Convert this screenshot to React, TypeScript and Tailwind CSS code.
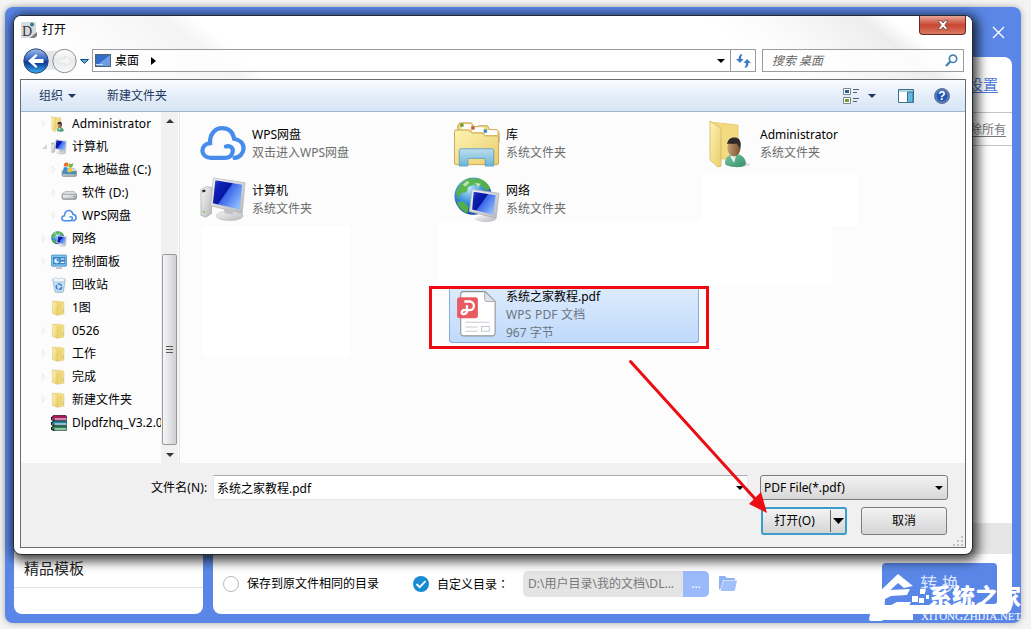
import { ReactNode } from "react";

type IconName =
  | "user"
  | "computer"
  | "diskC"
  | "diskD"
  | "cloud"
  | "network"
  | "control"
  | "recycle"
  | "folder"
  | "archive"
  | "library"
  | "pdf";

interface TreeItem {
  label: string;
  icon: IconName;
  indent?: boolean;
  arrow?: boolean;
  open?: boolean;
}

const treeItems: TreeItem[] = [
  { label: "Administrator", icon: "user", arrow: true },
  { label: "计算机", icon: "computer", arrow: true, open: true },
  { label: "本地磁盘 (C:)", icon: "diskC", indent: true, arrow: true },
  { label: "软件 (D:)", icon: "diskD", indent: true, arrow: true },
  { label: "WPS网盘", icon: "cloud", indent: true, arrow: true },
  { label: "网络", icon: "network", arrow: true },
  { label: "控制面板", icon: "control", arrow: true },
  { label: "回收站", icon: "recycle" },
  { label: "1图", icon: "folder" },
  { label: "0526", icon: "folder", arrow: true },
  { label: "工作", icon: "folder", arrow: true },
  { label: "完成", icon: "folder", arrow: true },
  { label: "新建文件夹", icon: "folder", arrow: true },
  { label: "Dlpdfzhq_V3.2.0", icon: "archive" },
];

const fileItems: { name: string; detail: string; icon: IconName }[] = [
  { name: "WPS网盘", detail: "双击进入WPS网盘", icon: "cloud" },
  { name: "库", detail: "系统文件夹", icon: "library" },
  { name: "Administrator", detail: "系统文件夹", icon: "user" },
  { name: "计算机", detail: "系统文件夹", icon: "computer" },
  { name: "网络", detail: "系统文件夹", icon: "network" },
];

function Gradients() {
  return (
    <svg width="0" height="0" className="absolute">
      <defs>
        <linearGradient id="screen" x1="0" y1="0" x2="1" y2=".7">
          <stop offset="0" stopColor="#3d5bd8" />
          <stop offset=".2" stopColor="#0f22b8" />
          <stop offset=".48" stopColor="#0816a0" />
          <stop offset=".52" stopColor="#3b66ea" />
          <stop offset="1" stopColor="#8dbcfb" />
        </linearGradient>
        <linearGradient id="metal" x1="0" y1="0" x2="1" y2="1">
          <stop offset="0" stopColor="#f7f7f7" />
          <stop offset="1" stopColor="#b4b7bb" />
        </linearGradient>
        <linearGradient id="yellow" x1="0" y1="0" x2="1" y2="1">
          <stop offset="0" stopColor="#fdf3b4" />
          <stop offset="1" stopColor="#ebcd6c" />
        </linearGradient>
        <linearGradient id="stand" x1="0" y1="0" x2="0" y2="1">
          <stop offset="0" stopColor="#b9def4" />
          <stop offset="1" stopColor="#5fb2e2" />
        </linearGradient>
        <radialGradient id="globe" cx=".4" cy=".3" r=".75">
          <stop offset="0" stopColor="#b5e6fb" />
          <stop offset=".5" stopColor="#3b8fd8" />
          <stop offset="1" stopColor="#0d3b9c" />
        </radialGradient>
        <linearGradient id="shirt" x1="0" y1="0" x2="1" y2="1">
          <stop offset="0" stopColor="#7cc4a2" />
          <stop offset="1" stopColor="#35906c" />
        </linearGradient>
        <linearGradient id="skin" x1="0" y1="0" x2="1" y2="0">
          <stop offset="0" stopColor="#c79c76" />
          <stop offset="1" stopColor="#76502f" />
        </linearGradient>
        <linearGradient id="back" x1="0" y1="0" x2="0" y2="1">
          <stop offset="0" stopColor="#9ebdea" />
          <stop offset=".45" stopColor="#2f60bd" />
          <stop offset=".55" stopColor="#0b3594" />
          <stop offset="1" stopColor="#36b4f2" />
        </linearGradient>
        <linearGradient id="forward" x1="0" y1="0" x2="0" y2="1">
          <stop offset="0" stopColor="#ffffff" />
          <stop offset=".5" stopColor="#e7e9eb" />
          <stop offset="1" stopColor="#fafafa" />
        </linearGradient>
      </defs>
    </svg>
  );
}

function Icon({ name, size }: { name: IconName; size: number }) {
  let body: ReactNode = null;
  switch (name) {
    case "cloud":
      body = (
        <g fill="none" stroke="#478ceb" strokeWidth="4.4" strokeLinecap="round">
          <path d="M27 26.500c5-1.500 8 2 7 6-.8 4-4 6-8 6H11.500C6 38.500 2.500 35 2.500 31c0-4.500 3.500-7.500 8-8C10 14 15.500 7.500 23 7.500c6.500 0 11 4 12.500 10.500" />
          <path d="M35.500 18.500c6 1 10 5 10 10 0 5-4 9.500-9.500 10" />
        </g>
      );
      break;
    case "computer":
      body = (
        <g>
          <path d="M1 13l6-3 5 1v27l-6 4-5-2z" fill="url(#metal)" stroke="#a5a5a5" strokeWidth=".7" />
          <path d="M2.500 15l3-1" stroke="#222" strokeWidth="2.200" />
          <path d="M3 36l2 1" stroke="#8cc63f" strokeWidth="1.500" />
          <ellipse cx="31" cy="40.500" rx="14" ry="5" fill="url(#metal)" stroke="#bbb" strokeWidth=".6" />
          <path d="M24 31l9 2 2 6-9-1z" fill="#bfc2c6" />
          <path d="M14 1l33 5-3 32-33-8z" fill="url(#metal)" stroke="#b7b7b7" strokeWidth=".8" />
          <path d="M16 3.500l28 4.500-2.500 26-28-6.500z" fill="url(#screen)" />
        </g>
      );
      break;
    case "network":
      body = (
        <g>
          <circle cx="20" cy="20" r="19.500" fill="url(#globe)" />
          <path d="M2 17C5 8 10 3 17 1l6 2-2 5-6 2-2 6-6 1-2 6zM23 1c8 1 12 5 15 11l-5 2-4-5-6 1-2-5zM3 26l7 0 5 5-1 7C8 35 4 31 3 26z" fill="#58b53c" opacity=".9" />
          <path d="M22 6l6 1-3 4zM9 8l5-4 2 2-4 4z" fill="#e2f5e6" opacity=".7" />
          <ellipse cx="33" cy="43.500" rx="11" ry="3.500" fill="url(#metal)" />
          <path d="M19 13l28 4-3 26-28-7z" fill="url(#metal)" stroke="#b4b4b4" strokeWidth=".8" />
          <path d="M20.500 15.500l23 3.500-2.500 20.500-22-5.500z" fill="url(#screen)" />
        </g>
      );
      break;
    case "library":
      body = (
        <g>
          <path d="M4 5l2-3h12l3 4h3l2-1h9l2 4h8l2 3v10H4z" fill="#f4dc87" stroke="#bf9e45" strokeWidth="1" />
          <path d="M8 3.500h10v5H8zM19 6.500h12v5H19zM32 9.500h13v5H32z" fill="#fff" />
          <path d="M6.500 2.500h3.500V6H6.500z" fill="#6b9b32" />
          <path d="M18 5.500h3.500V9H18z" fill="#c6562d" />
          <path d="M31 8.800h3.500v3.500H31z" fill="#3c8fc5" />
          <path d="M.5 11q0-1.500 1.500-1.500h13l4 3h10l4 3h13.500V44q0 1.500-1.500 1.500H2Q.5 45.500.5 44z" fill="url(#yellow)" stroke="#c9a54c" strokeWidth="1" />
          <path d="M5.500 31q0-2 2-2h32q2 0 2 2v16h-9v-7q0-1-1-1h-16q-1 0-1 1v7h-9z" fill="url(#stand)" stroke="#5b9fc9" strokeWidth="1" opacity=".92" />
        </g>
      );
      break;
    case "user":
      body = (
        <g>
          <path d="M2 2l28 3v34H12z" fill="#f1da80" stroke="#dfc164" strokeWidth=".7" />
          <path d="M2 1l11 7v38l-3 1-8-7z" fill="url(#yellow)" stroke="#d7b65a" strokeWidth=".8" />
          <ellipse cx="31" cy="44.500" rx="11" ry="2.500" fill="#c9cbc9" opacity=".6" />
          <path d="M17 43c0-6 5-9 10-9 6 0 10 3 11 9 0 4-7 4.500-12 4-5-1-9-1-9-4z" fill="url(#shirt)" />
          <path d="M22 36l4 7 2-7z" fill="#e8f2ee" />
          <ellipse cx="26" cy="28" rx="6.500" ry="8.500" fill="url(#skin)" />
          <path d="M19 24c1-5 4-7 8-6.500 5 .5 7 5 5 11l-3-5c-4 1-7 0-10 .5z" fill="#2f2a2a" />
        </g>
      );
      break;
    case "folder":
      body = (
        <g>
          <path d="M6 4h22l11 3v36H14z" fill="#f3de86" stroke="#dfc474" strokeWidth="1.500" />
          <path d="M4 3l15 5v38L4 40z" fill="url(#yellow)" stroke="#dcbf68" strokeWidth="1.500" />
          <path d="M21 20c4-3 4-9 9-9v32l-10 3z" fill="#f1d878" stroke="#dcbc58" strokeWidth="1.500" />
          <path d="M34 28h4v10h-4z" fill="#cfc98c" />
        </g>
      );
      break;
    case "diskC":
    case "diskD":
      body = (
        <g>
          <path d="M4 26l9-6h27l6 7v13q0 3-3 3H7q-3 0-4-3z" fill="#e6e8ea" stroke="#8d9194" strokeWidth="2" />
          <path d="M4 28h42v11q0 3-3 3H7q-3 0-3-3z" fill="url(#metal)" stroke="#75797d" strokeWidth="2" />
          <path d="M38 35h4" stroke="#36ad38" strokeWidth="4" />
          {name === "diskC" && (
            <g>
              <path d="M5 28h40v9H5z" fill="#478eb6" />
              <path d="M10 4q7-5 12 0l-2 11q-5-4-12 0z" fill="#ed6731" />
              <path d="M24 4q6 4 13-1l-3 13q-7 3-12-1z" fill="#76b83b" />
              <path d="M8 17q6-4 12 0l-2 12q-6-3-12 0z" fill="#2f91d8" />
              <path d="M22 18q5 3 12 0l-3 12q-6 3-11-1z" fill="#f5c52c" />
            </g>
          )}
        </g>
      );
      break;
    case "control":
      body = (
        <g>
          <rect x="1" y="3" width="46" height="34" rx="4" fill="#7cc4ee" stroke="#397db0" strokeWidth="2" />
          <path d="M6 9h37v22H6z" fill="#3c86c6" />
          <circle cx="17" cy="20" r="7.500" fill="#d9f0ff" />
          <path d="M17 20v-7a7 7 0 016 10z" fill="#318ad1" />
          <path d="M29 15h11M29 25h11" stroke="#fff" strokeWidth="3.500" />
          <path d="M18 37h12l4 8H14z" fill="#b9c4cc" />
        </g>
      );
      break;
    case "recycle":
      body = (
        <g>
          <path d="M5 7h38l-6 38q-13 4-25 0z" fill="#c5dcee" stroke="#8ba9bf" strokeWidth="2" />
          <path d="M5 6l9-4 8 4 9-4 12 5-5 7H9z" fill="#eef5fa" stroke="#a8bdca" strokeWidth="1.500" />
          <circle cx="24" cy="29" r="8" fill="none" stroke="#3f83d6" strokeWidth="5" strokeDasharray="13 3.700" />
        </g>
      );
      break;
    case "archive":
      body = (
        <g>
          <path d="M2 6l6-5h36l3 4v11H9z" fill="#a61b57" stroke="#27151d" strokeWidth="2" />
          <path d="M2 21l6-3h39v13H9z" fill="#2385a8" stroke="#152630" strokeWidth="2" />
          <path d="M2 36l6-3h39v13H9z" fill="#2d8a56" stroke="#14261c" strokeWidth="2" />
          <path d="M11 12h35M11 27h35M11 42h35" stroke="#fff" strokeWidth="3" />
          <path d="M2 6v8l8 4M2 21v8l8 4M2 36v7l8 4" fill="none" stroke="#111" strokeWidth="3.500" />
        </g>
      );
      break;
    case "pdf":
      body = (
        <g>
          <path d="M8 2.500h21l9.500 9.500V42q0 3-3 3H8.500q-3 0-3-3V5q0-2.500 2.500-2.500z" fill="#fff" stroke="#8c9196" strokeWidth="1" />
          <path d="M28.500 2.500V10q0 2 2 2h8z" fill="#dfe3e8" stroke="#9aa0a6" strokeWidth=".8" />
          <rect x="2" y="8" width="20" height="20" rx="2.500" fill="#e95b62" />
          <path d="M9 12h5a4 4 0 010 8.300H9.500M11.500 15.500V22q-1 2.500-4 2-2-1-.5-3 1-1 2.500-.8" fill="none" stroke="#fff" strokeWidth="2.200" />
          <path d="M10 32h23M10 36.500h12M10 40.500h12" stroke="#c9cccf" strokeWidth="1" />
          <path d="M25.500 36h7.500v4.500h-7.500z" fill="none" stroke="#c4c7ca" />
        </g>
      );
      break;
  }
  return (
    <svg width={size} height={size} viewBox="0 0 48 48" className="shrink-0">
      {body}
    </svg>
  );
}

function Caret({ className = "" }: { className?: string }) {
  return (
    <svg width="8" height="4" viewBox="0 0 8 4" className={className}>
      <path d="M0 0h8L4 4z" fill="currentColor" />
    </svg>
  );
}

function AppWindow() {
  return (
    <div className="ml-[5px] flex h-[616px] w-[1016px] flex-col rounded-[8px] bg-[#5a87e7] px-[9px] pb-[9px] shadow-[0_0_6px_rgba(0,0,0,0.3)]">
      <div className="flex h-[50px] shrink-0 items-center justify-end pr-[7px]">
        <svg width="13" height="13" viewBox="0 0 13 13" stroke="#fff" strokeWidth="1.3">
          <path d="M1 1l11 11M12 1L1 12" />
        </svg>
      </div>
      <div className="flex min-h-0 flex-1 gap-[10px]">
        <div className="flex w-[189px] flex-col justify-end rounded-lg bg-white">
          <div className="border-b border-[#e2e2e2] pb-[9px] pl-[10px] text-[15px] leading-[20px] text-[#222]">
            精品模板
          </div>
          <div className="h-[26px]" />
        </div>
        <div className="flex w-[799px] flex-col overflow-hidden rounded-lg bg-white">
          <div className="flex h-[56px] shrink-0 items-center justify-end border-b border-[#c4c4c4] pr-[14px] text-[15px] text-[#4f7bd8] underline underline-offset-2">
            设置
          </div>
          <div className="flex h-[33px] shrink-0 items-center justify-end border-b border-[#c4c4c4] pr-[6px] pt-[2px] text-[12px] text-[#777] underline underline-offset-2">
            移除所有
          </div>
          <div className="flex-1" />
          <div className="h-[31px] shrink-0 bg-[#e6e6e6]" />
          <div className="flex h-[60px] shrink-0 items-center pl-[10px] text-[12px]">
            <span className="h-[16px] w-[16px] rounded-full border border-[#bbb]" />
            <span className="ml-[8px] w-[166px]">保存到原文件相同的目录</span>
            <svg width="16" height="16" viewBox="0 0 16 16">
              <circle cx="8" cy="8" r="8" fill="#168bd4" />
              <path d="M3.500 8l3.200 3.200 5.800-6" fill="none" stroke="#fff" strokeWidth="1.800" />
            </svg>
            <span className="ml-[8px] w-[86px]">
              自定义目录<span className="font-['Noto_Sans_CJK_TC',sans-serif]">：</span>
            </span>
            <div className="flex h-[26px] w-[186px] overflow-hidden rounded-[5px] bg-[#e4e4e4]">
              <span className="flex w-[160px] items-center whitespace-nowrap pl-[5px] text-[12px] text-[#777]">D:\用户目录\我的文档\DL...</span>
              <span className="flex flex-1 items-center justify-center bg-[#9bbafc] text-white">...</span>
            </div>
            <svg width="18" height="16" viewBox="0 0 18 16" className="ml-[10px]">
              <path d="M0 1q0-1 1-1h5l2 2h7q1 0 1 1v1H4L2 12 0 14z" fill="#8fb2f5" />
              <path d="M4.500 4.500H18l-2 9.500q-.3 1-1.500 1H1.500z" fill="#a3c1f9" />
            </svg>
            <div className="mb-[9px] ml-auto mr-[15px] flex h-[42px] w-[115px] items-center justify-center self-end rounded-[4px] bg-[#5a87e7] text-[17px] text-[#d9e5ff]">
              转 换
            </div>
          </div>
        </div>
      </div>
    </div>
  );
}

function AddressBar() {
  return (
    <div className="flex h-[38px] shrink-0 items-start pl-[2px] pt-[7px]">
      <svg width="70" height="26" viewBox="0 0 70 26" className="-mt-[1px] shrink-0">
        <path d="M14 1q14 4 29 0v22q-14-3-29 0z" fill="#e3e5e7" />
        <circle cx="14" cy="13" r="12.2" fill="url(#back)" stroke="#314669" />
        <path d="M6 13l8-7 1.500 1.500L12 11h9.500v4H12l3.500 3.500L14 20z" fill="#fff" />
        <circle cx="42.500" cy="13" r="11.700" fill="url(#forward)" stroke="#8b9095" />
        <path d="M50 13l-7-5v3h-7v4h7v3z" fill="#f5f5f5" stroke="#dedede" strokeWidth=".7" />
        <path d="M58.500 11.500h8l-4 4z" fill="#58aee0" stroke="#164b7c" />
      </svg>
      <div className="flex h-[23px] w-[664px] items-center border border-[#999c9f] bg-white/80">
        <svg width="16" height="14" viewBox="0 0 16 14" className="ml-[2px]">
          <rect x=".5" y=".5" width="15" height="12" fill="#356dc5" stroke="#54616e" />
          <path d="M1 12L15 1v11z" fill="#6e9ee5" />
          <path d="M1 10.500h7" stroke="#bce5f4" />
        </svg>
        <span className="ml-[4px] text-[12px] text-black">桌面</span>
        <svg width="5" height="8" viewBox="0 0 5 8" className="ml-[12px]">
          <path d="M0 0l5 4-5 4z" />
        </svg>
        <Caret className="ml-auto mr-[5px]" />
        <span className="flex h-full w-[25px] items-center justify-center border-l border-[#999c9f]">
          <svg width="15" height="14" viewBox="0 0 15 14" fill="#3e79c8">
            <path d="M5.500 0C3 1 2.500 3 2.700 5H0l4 4 3.500-4H5.200C5 3.500 5 2 6.500 1z" />
            <path d="M9.500 14c2.500-1 3-3 2.800-5H15l-4-4-3.500 4h2.300c.2 1.500.2 3-1.300 4z" />
          </svg>
        </span>
      </div>
      <div className="ml-[6px] flex h-[23px] w-[202px] items-center justify-between border border-[#999c9f] bg-white/80 pl-[9px] pr-[5px]">
        <span className="text-[12px] italic text-[#666]">搜索 桌面</span>
        <svg width="13" height="13" viewBox="0 0 13 13" fill="none" stroke="#4784b4">
          <circle cx="8" cy="4.800" r="3.700" strokeWidth="1.700" />
          <path d="M5.300 7.500L1 12" strokeWidth="2.400" />
        </svg>
      </div>
    </div>
  );
}

function Toolbar() {
  return (
    <div className="flex h-[32px] shrink-0 items-center border-b border-[#9fb4cd] bg-linear-to-b from-[#fafcff] via-[#e5eefa] to-[#d8e5f5] pl-[18px] text-[12px] text-[#1e395b]">
      <span>组织</span>
      <Caret className="ml-[5px]" />
      <span className="ml-[31px]">新建文件夹</span>
      <svg width="17" height="16" viewBox="0 0 17 16" className="ml-auto">
        <path d="M.5.500h7v6h-7zM.5 9.500h7v6h-7z" fill="#fff" stroke="#758790" />
        <path d="M2 2h4v3H2z" fill="#315e91" />
        <path d="M2 11h4v3H2z" fill="#6ea226" />
        <path d="M10 1.500h6M10 4.500h4M10 10.500h6M10 13.500h4" stroke="#52616d" />
      </svg>
      <Caret className="ml-[8px]" />
      <svg width="16" height="14" viewBox="0 0 16 14" className="ml-[22px]">
        <path d="M.5.500h15v13H.5z" fill="#fff" stroke="#397190" />
        <path d="M1 1h14v2H1z" fill="#b3d4e5" />
        <path d="M9.500 3v10.500h5.500V3z" fill="#62b8e1" stroke="#397190" />
      </svg>
      <svg width="16" height="16" viewBox="0 0 16 16" className="ml-[20px] mr-[15px]">
        <circle cx="8" cy="8" r="7.500" fill="#2457ad" stroke="#69778f" />
        <circle cx="8" cy="8" r="6.200" fill="none" stroke="#88abd9" strokeWidth=".8" />
        <text x="8" y="12.200" textAnchor="middle" fill="#fff" fontSize="12" fontWeight="bold" fontFamily="Liberation Sans">?</text>
      </svg>
    </div>
  );
}

function FolderTree() {
  return (
    <div className="flex w-[159px] shrink-0 border-r border-[#dde6f0]">
      <div className="w-[140px] overflow-hidden">
        {treeItems.map((item) => (
          <div key={item.label} className={`flex h-[23px] items-center whitespace-nowrap ${item.indent ? "pl-[31px]" : "pl-[21px]"}`}>
            <svg width="5" height="7" viewBox="0 0 5 7" className="mr-[4px] shrink-0">
              {item.arrow && !item.open && <path d="M.5.500v6l3-3z" fill="none" stroke="#ebebeb" />}
              {item.open && <path d="M5 1v5H0z" fill="#d5d5d5" />}
            </svg>
            <Icon name={item.icon} size={16} />
            <span className={`ml-[5px] text-[12px] ${item.icon === "user" ? "tracking-[0.1px]" : ""}`}>{item.label}</span>
          </div>
        ))}
      </div>
      <div className="flex w-[17px] flex-col items-center bg-[#f1f1f2] text-[#333]">
        <Caret className="mt-[7px] rotate-180" />
        <div className="mt-[131px] flex h-[191px] w-[15px] shrink-0 flex-col items-center justify-center gap-[2px] rounded-[2px] border border-[#97999c] bg-linear-to-r from-[#f6f6f6] to-[#ced0d3]">
          <span className="h-px w-[7px] bg-[#555]" />
          <span className="h-px w-[7px] bg-[#555]" />
          <span className="h-px w-[7px] bg-[#555]" />
        </div>
        <Caret className="mt-[8px]" />
      </div>
    </div>
  );
}

function FileList() {
  return (
    <div className="relative flex-1 overflow-hidden">
      <div className="absolute left-[23px] top-[114px] h-[131px] w-[147px] bg-white" />
      <div className="absolute left-[257px] top-[109px] h-[64px] w-[395px] bg-white" />
      <div className="absolute left-[521px] top-[61px] h-[53px] w-[158px] bg-white" />
      <div className="relative grid grid-cols-[254px_254px_254px] pl-[20px] pt-[4px]">
        {fileItems.map((item) => (
          <div key={item.name} className="flex h-[56px] items-center">
            <Icon name={item.icon} size={item.icon === "user" ? 48 : 46} />
            <div className={`text-[12px] leading-[18px] ${item.icon === "user" ? "ml-[4px]" : "ml-[6px]"}`}>
              <p>{item.name}</p>
              <p className="text-[#6d6d6d]">{item.detail}</p>
            </div>
          </div>
        ))}
      </div>
      <div className="relative ml-[249px] mt-[58px] flex h-[63px] w-[280px] border-[3px] border-[#ee0a10] pl-[17px]">
        <div className="flex h-[54px] w-[250px] rounded-b-[3px] border border-t-0 border-[#84acdd] bg-linear-to-b from-[#dceafc] to-[#c0dafb] pl-[5px]">
          <Icon name="pdf" size={50} />
          <div className="-mt-[1px] ml-[1px] text-[12px] leading-[18px]">
            <p>系统之家教程.pdf</p>
            <p className="tracking-[0.2px] text-[#6d7480]">WPS PDF 文档</p>
            <p className="text-[#6d7480]">967 字节</p>
          </div>
        </div>
      </div>
    </div>
  );
}

function DialogFooter() {
  return (
    <div className="flex h-[84px] shrink-0 flex-col bg-[#f0f0f0] pl-[130px] pt-[12px] text-[12px]">
      <div className="flex items-center">
        <span className="w-[62px] tracking-[0.1px]">文件名(N):</span>
        <div className="flex h-[25px] w-[535px] items-center justify-between border border-[#e3e9ef] border-t-[#abadb3] bg-white pl-[3px] pr-[3px]">
          <span className="pt-[2px]">系统之家教程.pdf</span>
          <Caret />
        </div>
        <div className="ml-[12px] flex h-[25px] w-[188px] items-center justify-between rounded-[3px] border border-[#7c7c7c] bg-linear-to-b from-[#f3f3f3] to-[#d7d7d7] pl-[3px] pr-[4px]">
          <span>PDF File(*.pdf)</span>
          <Caret />
        </div>
      </div>
      <div className="mt-[7px] flex pl-[610px]">
        <button className="flex h-[28px] w-[86px] items-center rounded-[3px] border-2 border-[#3c9dcc] bg-linear-to-b from-[#f4f4f4] to-[#d5d5d5]">
          <span className="w-[67px] pr-[4px] text-center">打开(O)</span>
          <span className="flex h-[22px] flex-1 items-center justify-center border-l border-[#666]">
            <svg width="11" height="6" viewBox="0 0 11 6"><path d="M0 0h11L5.500 6z" /></svg>
          </span>
        </button>
        <button className="ml-[14px] h-[28px] w-[86px] rounded-[3px] border border-[#7c7c7c] bg-linear-to-b from-[#f3f3f3] to-[#d5d5d5]">取消</button>
      </div>
      <svg width="11" height="11" viewBox="0 0 11 11" className="ml-auto mr-[1px] mt-[1px]" fill="#c2c2c2">
        <path d="M8 0h2v2H8zM4 4h2v2H4zM8 4h2v2H8zM0 8h2v2H0zM4 8h2v2H4zM8 8h2v2H8z" />
      </svg>
    </div>
  );
}

function OpenDialog() {
  return (
    <div className="absolute left-[13px] top-[15px] flex h-[540px] w-[960px] flex-col rounded-[8px] border border-[#262a31] bg-white px-[6px] pb-[6px] text-black shadow-[2px_3px_12px_3px_rgba(0,0,0,0.75)]">
      <div className="-mx-[6px] flex flex-col rounded-t-[7px] bg-[linear-gradient(38deg,#fff_0%,#fff_8%,#f4f4f4_22%,#fff_25%,#fff_74%,#fafafa_80%,#ededed_89%,#fff_92%)] px-[6px]">
        <div className="flex h-[26px] items-start">
          <svg width="17" height="17" viewBox="0 0 17 17" className="ml-[1px] mt-[6px]">
            <rect width="15" height="16" rx="1" fill="#d8dbdd" />
            <text x="1" y="14" fontSize="14" fill="#35373a" fontFamily="Liberation Serif">D</text>
            <circle cx="11" cy="2.500" r="2" fill="#2c8097" />
            <path d="M9 16l7-6v4l-3 2z" fill="#777c80" />
          </svg>
          <span className="ml-[4px] mt-[5px] text-[12px] leading-[18px]">打开</span>
          <div className="ml-auto flex h-[19px] w-[47px] items-center justify-center rounded-b-[4px] border border-t-0 border-[#6a2924] bg-linear-to-b from-[#e8a597] via-[#c84631] to-[#d97862]">
            <svg width="12" height="10" viewBox="0 0 12 10">
              <path d="M1 .7h3l2 2.300 2-2.300h3L7.800 5 11 9.300H8L6 7 4 9.300H1L4.200 5z" fill="#fff" stroke="#6c4544" strokeWidth=".8" />
            </svg>
          </div>
        </div>
        <AddressBar />
      </div>
      <div className="mt-[-1px] flex min-h-0 flex-1 flex-col border border-[#666d75] bg-[#fcfcfc]">
        <Toolbar />
        <div className="flex min-h-0 flex-1">
          <FolderTree />
          <FileList />
        </div>
        <DialogFooter />
      </div>
    </div>
  );
}

function Watermark() {
  return (
    <div className="absolute left-[866px] top-[572px] flex text-white">
      <svg width="64" height="50" viewBox="0 0 64 50" fill="#fff">
        <path d="M11 22L32 2l15 12-9 2-6-5-13 12z" />
        <path d="M2 26l13-5 9-3 20-1-3 6-16 1-6 3-1 14h5l2-8 6-3h14l-2 4H33l-2 7h16v7H17l-1 1H5q-2 0-2-2l4-17-5-1z" />
        <path d="M46 24h6v6h-6zM54 17h5v5h-5zM53 26h5v5h-5zM60 23h3v4h-3z" />
      </svg>
      <div className="-ml-[9px] pt-[10px]">
        <div className="whitespace-nowrap pl-[8px] text-[23px] font-black leading-[28px]">系统之家</div>
        <div className="whitespace-nowrap font-['Liberation_Serif',serif] text-[11px] leading-[13px]">XITONGZHIJIA.NET</div>
      </div>
    </div>
  );
}

export default function App() {
  return (
    <div className="relative h-[629px] w-[1031px] overflow-hidden bg-[#f3f3f3] pt-[7px] font-['Noto_Sans','Noto_Sans_CJK_SC',sans-serif]">
      <Gradients />
      <AppWindow />
      <OpenDialog />
      <svg width="144" height="160" viewBox="0 0 144 160" className="absolute left-[626px] top-[357px]">
        <path d="M4.500 4.500L132 145" stroke="#ec0c12" strokeWidth="3" strokeLinecap="round" />
        <path d="M141 156l-18-9 12-12z" fill="#ec0c12" />
      </svg>
      <Watermark />
    </div>
  );
}
